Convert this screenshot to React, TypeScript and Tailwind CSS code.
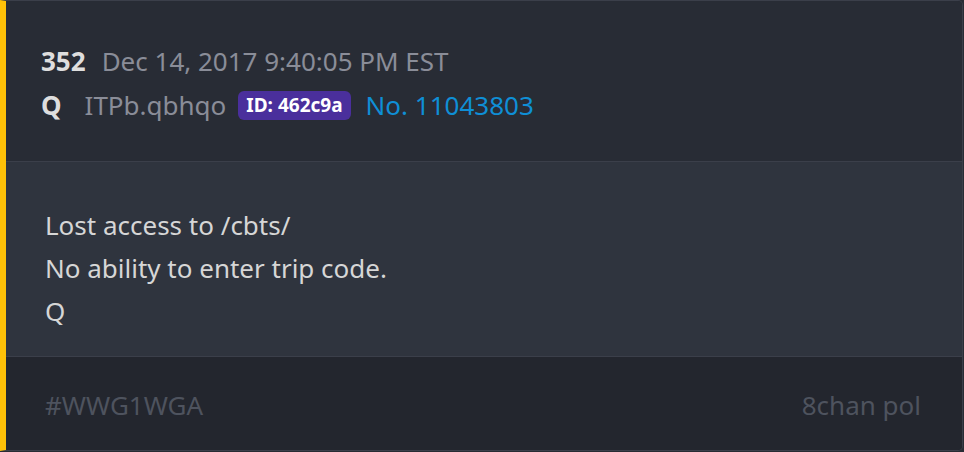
export default function App() {
  return (
    <div className="h-[452px] w-[964px] bg-[#282c34] font-['Noto_Sans',sans-serif]">
      <div className="flex h-[451px] w-[963px] flex-col overflow-hidden rounded-r-[5px] border border-l-[6px] border-[#3b3f4a] border-l-[#ffc107]">
        <div className="flex h-[161px] flex-col justify-center gap-[10px] border-b border-[#3b3f4a] bg-[#282c35] pl-[35px] pt-[4px]">
          <div className="flex items-baseline gap-[16px] text-[26px] leading-[34px]">
            <span className="font-bold text-[#dedede]">352</span>
            <span className="text-[#8a8d98]">Dec 14, 2017 9:40:05 PM EST</span>
          </div>
          <div className="flex items-center text-[26px] leading-[34px]">
            <span className="font-bold text-[#dedede]">Q</span>
            <span className="ml-[23px] text-[#8a8d98]">ITPb.qbhqo</span>
            <span className="ml-[12px] rounded-[6px] bg-[#4a2f9c] px-[8px] text-[19px] font-bold leading-[29px] text-white">
              ID: 462c9a
            </span>
            <span className="ml-[15px] text-[#0f8fd6]">No. 11043803</span>
          </div>
        </div>
        <div className="flex h-[195px] flex-col border-b border-[#3b3f4a] bg-[#2f343e] pl-[39px] pt-[42px] text-[26px] leading-[43px] text-[#d6d6d6]">
          <p>Lost access to /cbts/</p>
          <p>No ability to enter trip code.</p>
          <p>Q</p>
        </div>
        <div className="flex flex-1 items-center justify-between bg-[#23262e] pl-[39px] pr-[41px] pt-[3px] text-[26px] text-[#4e535e]">
          <span>#WWG1WGA</span>
          <span>8chan pol</span>
        </div>
      </div>
    </div>
  );
}
